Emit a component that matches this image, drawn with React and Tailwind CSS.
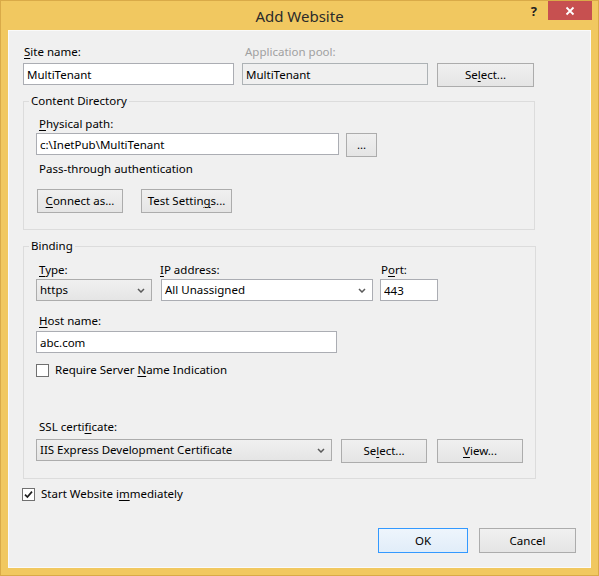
import React from "react"

const FONT = "font-['Segoe_UI','Noto_Sans',sans-serif]"

function Key({ children }) {
  return <span className="underline underline-offset-2">{children}</span>
}

function Button({ className = "", primary, children }) {
  return (
    <button
      className={`h-[24px] border bg-linear-to-b text-[11.5px] leading-[16px] text-black ${
        primary
          ? "border-[#3399ff] from-[#eef5fc] to-[#e1edf9]"
          : "border-[#acacac] from-[#f0f0f0] to-[#e5e5e5]"
      } ${className}`}
    >
      {children}
    </button>
  )
}

function TextBox({ className = "", value, gray }) {
  return (
    <input
      readOnly
      defaultValue={value}
      className={`h-[22px] border px-[3px] text-[11.5px] text-black outline-none ${
        gray ? "border-[#adb2b5] bg-[#f0f0f0]" : "border-[#abadb3] bg-white"
      } ${className}`}
    />
  )
}

function Chevron() {
  return (
    <svg width="8" height="5" viewBox="0 0 8 5">
      <path d="M1 1l3 3 3-3" fill="none" stroke="#5a5a5a" strokeWidth="1.5" />
    </svg>
  )
}

function Combo({ className = "", value, editable }) {
  return (
    <div
      className={`flex h-[22px] items-center justify-between border pl-[3px] pr-[6px] ${
        editable
          ? "border-[#abadb3] bg-white"
          : "border-[#acacac] bg-linear-to-b from-[#f0f0f0] to-[#e5e5e5]"
      } ${className}`}
    >
      <span className="leading-[16px]">{value}</span>
      <Chevron />
    </div>
  )
}

function CheckBox({ checked }) {
  return (
    <div className="flex h-[13px] w-[13px] shrink-0 items-center justify-center border border-[#707070] bg-white">
      {checked && (
        <svg width="9" height="9" viewBox="0 0 9 9">
          <path d="M1 4.6l2.4 2.4L8 1.6" fill="none" stroke="#1f1f1f" strokeWidth="1.7" />
        </svg>
      )}
    </div>
  )
}

export default function App() {
  return (
    <div className={`${FONT} flex h-[576px] w-[599px] flex-col border border-[#d9aa48] bg-[#f1c860] text-[11.5px] text-black`}>
      {/* Title bar */}
      <div className="grid h-[29px] shrink-0 grid-cols-[1fr_auto_1fr]">
        <div />
        <div className="pt-[4px] text-[15px] leading-[22px] text-[#2b2b2b]">Add Website</div>
        <div className="flex items-start justify-end">
          <span className="mt-[2px] mr-[11px] text-[13px] font-bold leading-[16px] text-[#222]">?</span>
          <div className="mr-[6px] flex h-[19px] w-[44px] items-center justify-center bg-[#c75050]">
            <svg width="10" height="10" viewBox="0 0 10 10">
              <path d="M1.5 1.5l7 7M8.5 1.5l-7 7" stroke="#fff" strokeWidth="1.8" />
            </svg>
          </div>
        </div>
      </div>

      {/* Client area */}
      <div className="mx-[7px] mb-[7px] flex-1 border border-[#fafafa] bg-[#f0f0f0] px-[14px] pt-[13px]">
        {/* Site name / app pool */}
        <div className="flex">
          <div className="w-[211px]">
            <div className="pl-[1px] leading-[16px]"><Key>S</Key>ite name:</div>
            <TextBox className="mt-[3px] w-full" value="MultiTenant" />
          </div>
          <div className="ml-[8px] w-[186px]">
            <div className="pl-[3px] leading-[16px] text-[#a0a0a0]">Application pool:</div>
            <TextBox gray className="mt-[3px] w-full" value="MultiTenant" />
          </div>
          <Button className="ml-[9px] mt-[19px] w-[97px]">Se<Key>l</Key>ect...</Button>
        </div>

        {/* Content Directory */}
        <fieldset className="mt-[6px] w-[512px] border border-[#dcdcdc] px-[12px] pt-[7px] pb-[16px]">
          <legend className="-ml-[7px] px-[2px] leading-[16px]">Content Directory</legend>
          <div className="pl-[3px] leading-[16px]"><Key>P</Key>hysical path:</div>
          <div className="mt-[1px] flex items-start">
            <TextBox className="w-[303px]" value="c:\InetPub\MultiTenant" />
            <Button className="ml-[7px] w-[31px]">...</Button>
          </div>
          <div className="mt-[4px] pl-[3px] leading-[16px]">Pass-through authentication</div>
          <div className="mt-[12px] flex">
            <Button className="ml-[1px] w-[86px]"><Key>C</Key>onnect as...</Button>
            <Button className="ml-[18px] w-[91px]">Test Settin<Key>g</Key>s...</Button>
          </div>
        </fieldset>

        {/* Binding */}
        <fieldset className="mt-[8px] w-[512px] border border-[#dcdcdc] px-[12px] pt-[8px] pb-[15px]">
          <legend className="-ml-[7px] px-[2px] leading-[16px]">Binding</legend>
          <div className="flex">
            <div className="w-[116px]">
              <div className="pl-[3px] leading-[16px]"><Key>T</Key>ype:</div>
              <Combo className="mt-[1px] w-[116px]" value="https" />
            </div>
            <div className="ml-[9px] w-[212px]">
              <div className="-ml-[1px] leading-[16px]"><Key>I</Key>P address:</div>
              <Combo editable className="mt-[1px] w-[212px]" value="All Unassigned" />
            </div>
            <div className="ml-[7px] w-[58px]">
              <div className="pl-[1px] leading-[16px]">P<Key>o</Key>rt:</div>
              <TextBox className="mt-[1px] w-[58px]" value="443" />
            </div>
          </div>

          <div className="mt-[12px] pl-[3px] leading-[16px]"><Key>H</Key>ost name:</div>
          <TextBox className="mt-[2px] w-[301px]" value="abc.com" />

          <div className="mt-[9px] flex items-center gap-[6px] leading-[16px]">
            <CheckBox />
            <span>Require Server <Key>N</Key>ame Indication</span>
          </div>

          <div className="mt-[41px] pl-[3px] leading-[16px]">SSL certi<Key>f</Key>icate:</div>
          <div className="mt-[4px] flex items-start">
            <Combo className="w-[296px]" value="IIS Express Development Certificate" />
            <Button className="ml-[9px] w-[86px]">Se<Key>l</Key>ect...</Button>
            <Button className="ml-[10px] w-[86px]"><Key>V</Key>iew...</Button>
          </div>
        </fieldset>

        <div className="mt-[7px] -ml-[1px] flex items-center gap-[6px] leading-[16px]">
          <CheckBox checked />
          <span>Start Website i<Key>m</Key>mediately</span>
        </div>

        <div className="mt-[26px] flex justify-end">
          <Button primary className="h-[25px] w-[90px]">OK</Button>
          <Button className="ml-[11px] h-[25px] w-[97px]">Cancel</Button>
        </div>
      </div>
    </div>
  )
}
